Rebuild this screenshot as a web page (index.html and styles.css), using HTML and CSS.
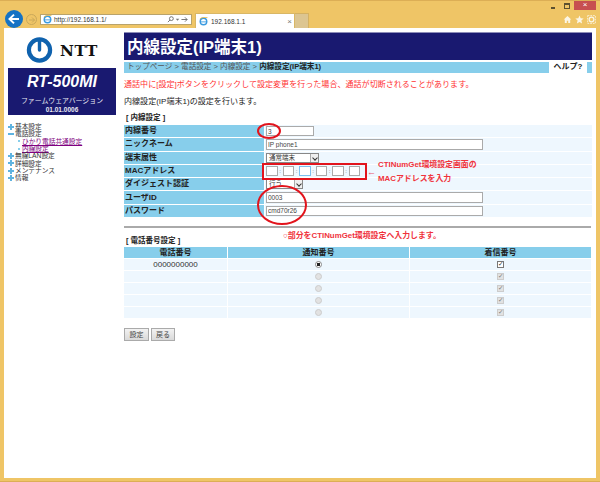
FILE: index.html
```html
<!DOCTYPE html>
<html lang="ja">
<head>
<meta charset="utf-8">
<title>内線設定</title>
<link rel="stylesheet" href="styles.css">
</head>
<body>
<div class="window">
  <header class="chrome">
    <span class="back"><svg width="12" height="12" viewBox="0 0 12 12"><path d="M1.5 6h9.5M6 1.6 1.5 6 6 10.4" fill="none" stroke="#fff" stroke-width="2"/></svg></span>
    <span class="forward"><svg width="8" height="8" viewBox="0 0 8 8"><path d="M1 4h5.5M4 1.5 6.5 4 4 6.5" fill="none" stroke="#c9a85a" stroke-width="1"/></svg></span>
    <div class="address">
      <svg class="ie" width="9" height="9" viewBox="0 0 10 10"><circle cx="5" cy="5" r="3.6" fill="none" stroke="#3b9be0" stroke-width="1.6"/><path d="M1 5.4h8" stroke="#3b9be0" stroke-width="1"/><path d="M1 2C3 0 8 .5 9.4.6" fill="none" stroke="#e9b93f" stroke-width=".9"/></svg>
      <span class="url">http://192.168.1.1/</span>
      <span class="addr-tools">
        <svg width="7" height="7" viewBox="0 0 8 8"><circle cx="5" cy="3" r="2.2" fill="none" stroke="#666"/><path d="M3.4 4.6 1 7" stroke="#666"/></svg>
        <svg width="5" height="7" viewBox="0 0 5 8"><path d="M.5 3h4L2.5 5.5z" fill="#777"/></svg>
        <svg width="7" height="7" viewBox="0 0 8 8"><path d="M.5 4h6.5M4.5 1.5 7 4 4.5 6.5" fill="none" stroke="#666"/></svg>
      </span>
    </div>
    <div class="tab">
      <svg class="ie" width="9" height="9" viewBox="0 0 10 10"><circle cx="5" cy="5" r="3.6" fill="none" stroke="#3b9be0" stroke-width="1.6"/><path d="M1 5.4h8" stroke="#3b9be0" stroke-width="1"/><path d="M1 2C3 0 8 .5 9.4.6" fill="none" stroke="#e9b93f" stroke-width=".9"/></svg>
      <span class="tab-title">192.168.1.1</span>
      <span class="tab-x">×</span>
    </div>
    <div class="tab-new"></div>
    <div class="win-right">
      <div class="win-buttons">
        <span class="min"></span>
        <span class="max"></span>
        <span class="close">×</span>
      </div>
      <div class="tools">
        <svg width="9" height="9" viewBox="0 0 10 10"><path d="M5 1 .8 5H2v4h2.2V6.4h1.6V9H8V5h1.2z" fill="#fbf6e6"/></svg>
        <svg width="9" height="9" viewBox="0 0 10 10"><path d="M5 .6 6.3 3.7l3.3.3-2.5 2.2.8 3.2L5 7.7 2.1 9.4l.8-3.2L.4 4l3.3-.3z" fill="#fbf6e6"/></svg>
        <svg width="9" height="9" viewBox="0 0 10 10"><circle cx="5" cy="5" r="2.6" fill="none" stroke="#fbf6e6" stroke-width="1.4"/><rect x=".7" y=".7" width="8.6" height="8.6" fill="none" stroke="#fbf6e6" stroke-width=".9" stroke-dasharray="2 1"/></svg>
      </div>
    </div>
  </header>

  <div class="page">
    <aside class="side">
      <div class="logo">
        <svg width="27" height="26" viewBox="0 0 26 26"><circle cx="13" cy="13" r="10.6" fill="none" stroke="#0f62ae" stroke-width="4.2"/><path d="M13 3v10" stroke="#0f62ae" stroke-width="3.4" stroke-linecap="round"/></svg>
        <span class="logo-text">NTT</span>
      </div>
      <div class="model">
        <div class="model-name">RT-500MI</div>
        <div class="fw">ファームウェアバージョン</div>
        <div class="fw-num">01.01.0006</div>
      </div>
      <ul class="tree">
        <li><i class="plus"></i>基本設定</li>
        <li><i class="minus"></i>電話設定</li>
        <li class="sub"><i class="dot"></i><a href="#">ひかり電話共通設定</a></li>
        <li class="sub"><i class="dot"></i><a href="#">内線設定</a></li>
        <li><i class="plus"></i>無線LAN設定</li>
        <li><i class="plus"></i>詳細設定</li>
        <li><i class="plus"></i>メンテナンス</li>
        <li><i class="plus"></i>情報</li>
      </ul>
    </aside>

    <main class="main">
      <h1 class="title">内線設定(IP端末1)</h1>
      <nav class="crumb">
        <div class="crumb-path">トップページ &gt; 電話設定 &gt; 内線設定 &gt; <b>内線設定(IP端末1)</b></div>
        <div class="help">ヘルプ?</div>
        <div class="crumb-end"></div>
      </nav>
      <p class="warn">通話中に[設定]ボタンをクリックして設定変更を行った場合、通話が切断されることがあります。</p>
      <p class="desc">内線設定(IP端末1)の設定を行います。</p>
      <h2 class="section first">[ 内線設定 ]</h2>
      <table class="form">
        <tr><th>内線番号</th><td><input class="in-short" value="3"></td></tr>
        <tr><th>ニックネーム</th><td><input class="in-long" value="IP phone1"></td></tr>
        <tr><th>端末属性</th><td><span class="sel sel-a">通常端末<i class="caret"></i></span></td></tr>
        <tr><th>MACアドレス</th><td class="mac"><input><span>:</span><input><span>:</span><input class="focus"><span>:</span><input><span>:</span><input><span>:</span><input></td></tr>
        <tr><th>ダイジェスト認証</th><td><span class="sel sel-b">行う<i class="caret"></i></span></td></tr>
        <tr><th>ユーザID</th><td><input class="in-long" value="0003"></td></tr>
        <tr><th>パスワード</th><td><input class="in-long" value="cmd70r26"></td></tr>
      </table>
      <hr class="rule">
      <h2 class="section second">[ 電話番号設定 ]</h2>
      <table class="nums">
        <tr><th class="c1">電話番号</th><th class="c2">通知番号</th><th class="c3">着信番号</th></tr>
        <tr><td>0000000000</td><td><i class="radio on"></i></td><td><i class="check on">✓</i></td></tr>
        <tr><td></td><td><i class="radio"></i></td><td><i class="check">✓</i></td></tr>
        <tr><td></td><td><i class="radio"></i></td><td><i class="check">✓</i></td></tr>
        <tr><td></td><td><i class="radio"></i></td><td><i class="check">✓</i></td></tr>
        <tr><td></td><td><i class="radio"></i></td><td><i class="check">✓</i></td></tr>
      </table>
      <div class="actions">
        <button class="btn btn-set">設定</button>
        <button class="btn btn-back">戻る</button>
      </div>
    </main>
  </div>

  <div class="mark ring-num"></div>
  <div class="mark ring-auth"></div>
  <div class="mark box-mac"></div>
  <div class="mark arrow">←</div>
  <div class="mark note note-1">CTINumGet環境設定画面の</div>
  <div class="mark note note-2">MACアドレスを入力</div>
  <div class="mark note note-3">○部分をCTINumGet環境設定へ入力します。</div>
</div>
</body>
</html>
```

FILE: styles.css
```css
* { box-sizing: border-box; }
html, body { margin: 0; padding: 0; }
body {
  width: 600px;
  height: 482px;
  overflow: hidden;
  background: #efc566;
  font-family: "Liberation Sans", "Noto Sans CJK JP", sans-serif;
  color: #222;
}
.window { position: relative; width: 600px; height: 482px; display: flex; flex-direction: column; padding: 0 4px 3px; border-top: 1px solid #dcae55; border-bottom: 1px solid #dcae55; }

/* browser chrome */
.chrome { height: 27px; flex: none; display: flex; align-items: flex-start; margin: 0 -4px; padding: 0 0 0 5px; }
.back { width: 18px; height: 18px; margin-top: 9px; border-radius: 50%; background: #1673c4; display: flex; align-items: center; justify-content: center; flex: none; }
.forward { width: 11px; height: 11px; margin: 13px 0 0 3px; border-radius: 50%; border: 1px solid #c9a85a; display: flex; align-items: center; justify-content: center; flex: none; }
.address { width: 152px; height: 11px; margin: 13px 0 0 3px; background: #fff; border: 1px solid #b9a36b; display: flex; align-items: center; padding: 0 3px 0 2px; gap: 2px; flex: none; }
.url { font-size: 6.5px; flex: 1; color: #333; white-space: nowrap; }
.addr-tools { display: flex; align-items: center; gap: 1px; }
.tab { width: 100px; height: 15px; margin: 12px 0 0 3px; background: #fff; border: 1px solid #d9b765; border-bottom: 0; display: flex; align-items: center; padding: 0 2px 0 3px; gap: 3px; flex: none; }
.tab-title { font-size: 6.5px; flex: 1; color: #333; }
.tab-x { font-size: 8px; color: #777; }
.tab-new { width: 14px; height: 15px; margin-top: 12px; background: #dcc591; border: 1px solid #d4b163; border-left: 0; border-bottom: 0; flex: none; }
.win-right { margin-left: auto; display: flex; flex-direction: column; align-items: flex-end; }
.win-buttons { display: flex; align-items: center; height: 9px; margin-right: 4px; }
.min { width: 4px; height: 2px; background: #5c5030; margin: 5px 9px 0 0; }
.max { width: 6px; height: 6px; border: 1px solid #5c5030; border-top-width: 2px; margin-right: 4px; }
.close { width: 22px; height: 9px; background: #c75050; color: #fff; font-size: 8px; line-height: 8px; text-align: center; }
.tools { display: flex; gap: 3px; margin: 5px 4px 0 0; }

/* page frame */
.page { flex: 1; display: flex; background: #fff; min-height: 0; }
.side { width: 120px; flex: none; padding: 9px 0 0 4px; }
.logo { display: flex; align-items: center; gap: 7px; height: 26px; padding-left: 18px; }
.logo-text { font-family: "DejaVu Serif", "Liberation Serif", serif; font-weight: 700; font-size: 14.5px; letter-spacing: .6px; color: #111; transform: scaleX(1.05); transform-origin: left; }
.model { width: 108px; height: 47px; margin-top: 5px; background: #191970; color: #e9e9f3; text-align: center; padding-top: 5px; }
.model-name { font-size: 16px; line-height: 17px; font-weight: 700; font-style: italic; color: #fff; }
.fw { font-size: 6.9px; line-height: 9px; margin-top: 6px; }
.fw-num { font-size: 6.5px; line-height: 9px; font-weight: 700; }
.tree { list-style: none; margin: 8px 0 0; padding: 0; font-size: 6.7px; line-height: 7.35px; color: #333; }
.tree li { display: flex; align-items: center; height: 7.35px; white-space: nowrap; }
.tree .sub { padding-left: 10px; }
.tree a { color: #800080; }
.plus, .minus, .dot { display: inline-block; flex: none; position: relative; }
.plus { width: 6px; height: 6px; margin-right: 1px; background: linear-gradient(#5fb3e0, #5fb3e0) center/6px 2px no-repeat, linear-gradient(#5fb3e0, #5fb3e0) center/2px 6px no-repeat; }
.minus { width: 6px; height: 2px; margin-right: 1px; background: #5fb3e0; }
.dot { width: 2px; height: 2px; margin-right: 2px; background: #87ceeb; }

.main { width: 468px; flex: none; padding-top: 4px; }
.title { margin: 0; height: 28px; background: #191970; color: #fff; font-size: 16.5px; line-height: 28px; font-weight: 700; padding-left: 3px; border-top: 1px solid #8d8db8; }
.crumb { display: flex; height: 11px; margin-top: 2px; font-size: 7.6px; line-height: 10px; }
.crumb-path { flex: 1; background: #87ceeb; color: #555; padding-left: 3px; white-space: nowrap; }
.crumb-path b { color: #222; }
.help { width: 38px; text-align: center; font-size: 8px; font-weight: 700; background: #fff; color: #222; }
.crumb-end { width: 5px; background: #87ceeb; }
.warn { margin: 6px 0 0; font-size: 8.05px; line-height: 11px; color: #f33; white-space: nowrap; }
.desc { margin: 6px 0 0; font-size: 8.05px; line-height: 11px; color: #222; white-space: nowrap; }
.section { margin: 6px 0 0 2px; font-size: 7.5px; line-height: 10px; font-weight: 700; color: #222; }
.section.first { margin-top: 6px; }
.section.second { margin-top: 8px; }

.form { margin-top: 1px; width: 468px; border-collapse: separate; border-spacing: 0 1px; table-layout: fixed; }
.form th { width: 141px; height: 12.3px; padding: 0 0 0 1px; background: #87ceeb; font-size: 8px; font-weight: 700; text-align: left; border-right: 1px solid #fff; color: #222; line-height: 12px; white-space: nowrap; }
.form td { height: 12.3px; padding: 0 0 0 1px; background: #eef7fe; font-size: 0; line-height: 0; }
.form input { height: 10.5px; padding: 0 1px; margin: 0; border: 1px solid #aaa; font-family: inherit; font-size: 6.5px; color: #444; background: #fff; vertical-align: middle; outline: 0; }
.in-short { width: 48px; }
.in-long { width: 217px; }
.mac { white-space: nowrap; }
.mac input { width: 11.5px; }
.mac .focus { border-color: #7cc0ee; }
.mac span { display: inline-block; width: 5px; font-size: 6px; line-height: 10px; text-align: center; color: #555; vertical-align: middle; }
.sel { display: inline-flex; align-items: center; justify-content: space-between; height: 10px; border: 1px solid #888; background: #fff; font-size: 6.5px; line-height: 8px; padding-left: 2px; color: #333; vertical-align: middle; }
.sel-a { width: 53px; }
.sel-b { width: 37px; }
.caret { width: 8px; height: 8px; background: #efefef; border-left: 1px solid #aaa; position: relative; }
.caret::after { content: ""; position: absolute; left: 1.5px; top: 2px; width: 3px; height: 3px; border: solid #333; border-width: 0 1px 1px 0; transform: rotate(45deg); }

.rule { margin: 8px 0 0; width: 467px; height: 2px; border: 0; background: #aaa; }
.nums { margin-top: 1px; width: 468px; border-collapse: separate; border-spacing: 0; table-layout: fixed; }
.nums th { height: 12px; background: #87ceeb; font-size: 8px; line-height: 11px; font-weight: 700; text-align: center; border-right: 1px solid #fff; border-bottom: 1px solid #fff; color: #222; padding: 0; }
.nums td { height: 12px; background: #eef7fe; font-size: 8px; text-align: center; color: #333; padding: 0; border-right: 1px solid #fff; border-bottom: 1px solid #fff; line-height: 0; }
.nums .c1 { width: 104px; }
.nums .c2 { width: 182px; }
.radio { display: inline-block; width: 7px; height: 7px; border-radius: 50%; background: #e2e2e2; border: 1px solid #ccc; vertical-align: middle; }
.radio.on { background: radial-gradient(circle, #222 0 1.6px, #fff 2px); border-color: #888; }
.check { display: inline-block; width: 7px; height: 7px; background: #e2e2e2; border: 1px solid #ccc; font-style: normal; font-size: 6.5px; line-height: 5px; color: #777; vertical-align: middle; font-family: "DejaVu Sans", sans-serif; overflow: hidden; }
.check.on { background: #fff; border-color: #777; color: #222; }

.actions { display: flex; gap: 2px; margin-top: 9px; }
.btn { height: 13px; padding: 0; border: 1px solid #aaa; background: linear-gradient(#f2f2f2, #d9d9d9); font-family: inherit; font-size: 7px; line-height: 10px; color: #444; }
.btn-set { width: 25px; }
.btn-back { width: 24px; }

/* red annotations lying over the screenshot */
.mark { position: absolute; }
.ring-num { left: 257px; top: 122px; width: 24px; height: 16px; border: 2.5px solid #e2141c; border-radius: 50%; }
.ring-auth { left: 257px; top: 184px; width: 50px; height: 40px; border: 2.5px solid #e2141c; border-radius: 50%; }
.box-mac { left: 262px; top: 162px; width: 105px; height: 17px; border: 2.5px solid #e2141c; }
.arrow { left: 367px; top: 165px; font-size: 9px; line-height: 12px; color: #e8566a; }
.note { font-size: 7.9px; line-height: 10px; font-weight: 700; color: #f0323c; white-space: nowrap; }
.note-1 { left: 378px; top: 159px; }
.note-2 { left: 378px; top: 173px; }
.note-3 { left: 283px; top: 230px; }
```
